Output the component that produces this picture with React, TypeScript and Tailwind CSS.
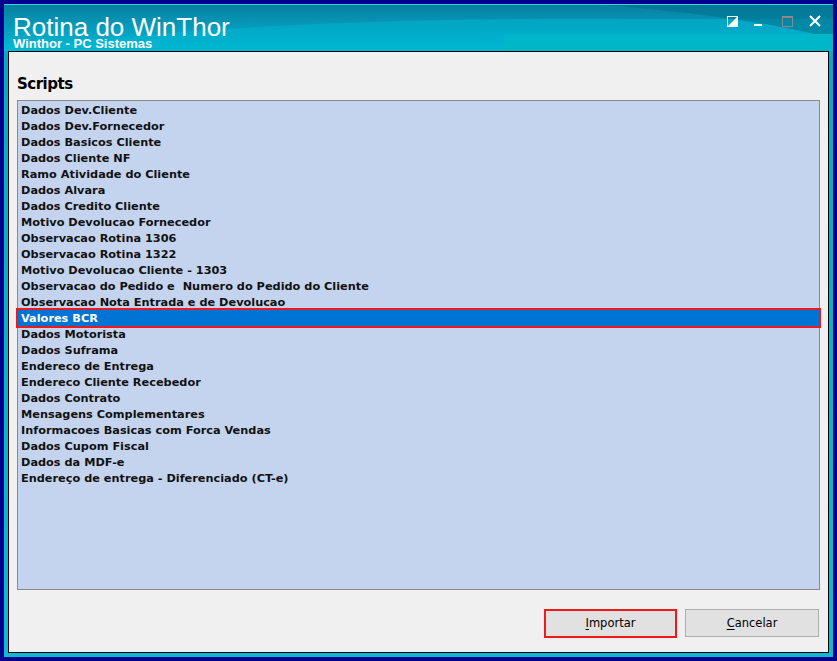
import React from 'react';

const scripts = [
  'Dados Dev.Cliente',
  'Dados Dev.Fornecedor',
  'Dados Basicos Cliente',
  'Dados Cliente NF',
  'Ramo Atividade do Cliente',
  'Dados Alvara',
  'Dados Credito Cliente',
  'Motivo Devolucao Fornecedor',
  'Observacao Rotina 1306',
  'Observacao Rotina 1322',
  'Motivo Devolucao Cliente - 1303',
  'Observacao do Pedido e  Numero do Pedido do Cliente',
  'Observacao Nota Entrada e de Devolucao',
  'Valores BCR',
  'Dados Motorista',
  'Dados Suframa',
  'Endereco de Entrega',
  'Endereco Cliente Recebedor',
  'Dados Contrato',
  'Mensagens Complementares',
  'Informacoes Basicas com Forca Vendas',
  'Dados Cupom Fiscal',
  'Dados da MDF-e',
  'Endereço de entrega - Diferenciado (CT-e)',
];

const SELECTED = 'Valores BCR';

const TitleBar: React.FC = () => (
  <div className="relative h-[46px] bg-[linear-gradient(to_bottom,#0a7fa0,#05a2c2_60%,#00bcd6)]">
    {/* swoosh decoration */}
    <svg className="absolute inset-0" width="829" height="46" viewBox="0 0 829 46">
      <path d="M0 46 C 180 20, 420 12, 640 14 L 829 14 L 829 46 Z" fill="#00b4cf" opacity="0.55" />
      <path d="M600 0 L 829 0 L 829 34 C 780 20, 700 8, 600 0 Z" fill="#006f8d" opacity="0.55" />
      <path d="M500 29 L 829 29 L 829 46 L 500 46 Z" fill="#00b6c9" />
    </svg>
    <div className="relative pl-[9px] pt-[11px] text-white font-['Liberation_Sans',Arial,sans-serif]">
      <div className="text-[26px] leading-[22px]">Rotina do WinThor</div>
      <div className="text-[13px] font-bold leading-[12px]">Winthor - PC Sistemas</div>
    </div>
    <div className="absolute top-[10px] left-[723px] flex items-start">
      <svg width="11" height="11" viewBox="0 0 11 11" className="mt-[1px]">
        <rect x="0.5" y="0.5" width="10" height="10" fill="none" stroke="#fff" />
        <path d="M10 1 L10 10 L1 10 Z" fill="#fff" />
      </svg>
      <svg width="10" height="11" viewBox="0 0 10 11" className="ml-[16px] mt-[1px]">
        <rect x="0" y="8" width="8" height="2" fill="#fff" />
      </svg>
      <svg width="11" height="11" viewBox="0 0 11 11" className="ml-[18px] mt-[1px]">
        <rect x="0.5" y="0.5" width="10" height="10" fill="none" stroke="#8a8a8a" />
        <rect x="0" y="0" width="11" height="2" fill="#8a8a8a" />
      </svg>
      <svg width="12" height="12" viewBox="0 0 12 12" className="ml-[16px]">
        <path d="M1 1 L11 11 M11 1 L1 11" stroke="#fff" strokeWidth="2" />
      </svg>
    </div>
  </div>
);

const App: React.FC = () => {
  return (
    <div className="w-[837px] h-[661px] bg-[#00008f] p-[4px] font-['DejaVu_Sans',Tahoma,sans-serif]">
      <div className="h-full flex flex-col bg-[linear-gradient(to_bottom,#0aa6c4,#12b8d0)] border-t border-[#3fd0e0]">
        <TitleBar />
        <div className="flex-1 mx-[4px] mb-[4px] border border-black bg-[#f0f0f0] flex flex-col px-[8px]">
          <div className="pt-[22px] pb-[6px] text-[15px] tracking-[-0.5px] font-bold leading-[20px] text-black">Scripts</div>
          <div className="h-[490px] border border-[#8a8a8a] bg-[#c5d4ee] pt-[1px]">
            {scripts.map((s) => {
              const sel = s === SELECTED;
              return (
                <div
                  key={s}
                  className={
                    sel
                      ? 'h-[16px] leading-[18px] pl-[3px] text-[11.3px] font-bold text-white bg-[#0074d4] outline-2 outline-[#f01818] whitespace-pre'
                      : 'h-[16px] leading-[18px] pl-[3px] text-[11.3px] font-bold text-[#111] whitespace-pre'
                  }
                >
                  {s}
                </div>
              );
            })}
          </div>
          <div className="flex justify-end gap-[8px] mt-[19px] pr-[1px]">
            <button className="w-[133px] h-[29px] pt-[1px] border-2 border-[#f01818] bg-[#e1e1e1] text-[11.5px] text-black">
              <span className="underline underline-offset-2">I</span>mportar
            </button>
            <button className="w-[134px] h-[28px] pt-[1px] border border-[#adadad] bg-[#e1e1e1] text-[11.5px] text-black">
              <span className="underline underline-offset-2">C</span>ancelar
            </button>
          </div>
        </div>
      </div>
    </div>
  );
};

export default App;
